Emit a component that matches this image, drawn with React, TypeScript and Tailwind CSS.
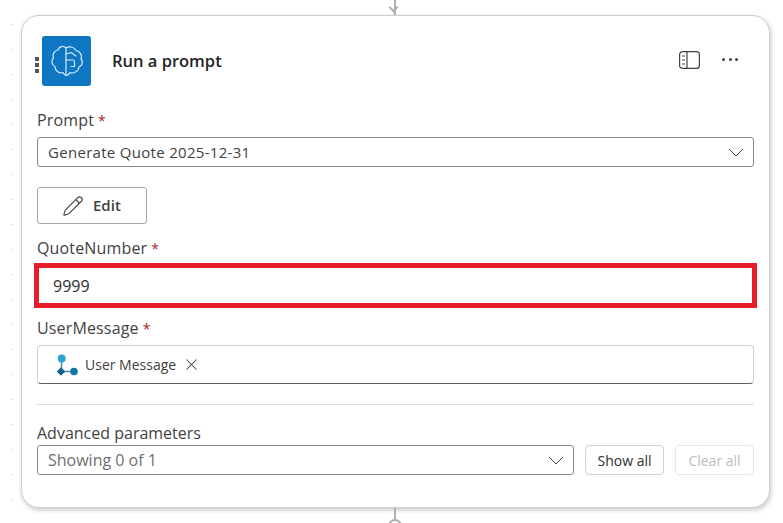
import { Pencil, X } from 'lucide-react';

function Chevron() {
    return (
        <svg width="16" height="9" viewBox="0 0 16 9" fill="none" className="text-[#424242]">
            <path d="M1 1 L8 8 L15 1" stroke="currentColor" strokeWidth="1" />
        </svg>
    );
}

function BrainIcon() {
    return (
        <svg width="32" height="32" viewBox="0 0 32 32" fill="none" stroke="#d6eafa" strokeWidth="1.2" strokeLinejoin="round" strokeLinecap="round">
            <path d="M15 3 C12.5 0.5 8 1 7 5 C3.5 5.5 1 9.5 2.5 13 C0 15.5 0.5 20 4 21.5 C4 26 8.5 29 12 27.5 C13 29.5 14 30.5 15 30.5 Z" />
            <path d="M15 3 C18 1 23 1.5 25 5.5 C29 6 31.5 10.5 30 14 C32.5 17 31 21 28 22 C27.5 26.5 22 29 19 27.5 C18 29.5 16.5 30.5 15 30.5" />
            <path d="M15 9 L20 7.5 L25 11 M15 15 L22 15 C23 15 23.5 16 23.5 17 L23.5 21.5 L20 21.5" />
        </svg>
    );
}

function Label({ text }: { text: string }) {
    return (
        <div className="text-[16px] leading-[22px] tracking-[0.15px] text-[#424242]">
            {text}
            <span className="ml-[4px] text-[14px] text-[#a4262c]">*</span>
        </div>
    );
}

export default function App() {
    return (
        <div className="relative h-[523px] w-[783px] overflow-hidden bg-white bg-[radial-gradient(circle,#bdbdbd_0.6px,transparent_1px)] bg-[size:25px_25px] bg-[position:0px_-13px] pl-[21px] pt-[15px] font-['Open_Sans',sans-serif]">
            {/* Connectors above and below the card */}
            <div className="absolute left-[394px] top-0 h-[15px] w-[2px] bg-[#b0b0b0]" />
            <div className="absolute left-[390px] top-[4px] h-[7px] w-[7px] -rotate-45 border-b-2 border-l-2 border-[#b0b0b0] ml-[-0.5px]" />
            <div className="absolute left-[394px] top-[508px] h-[13px] w-[2px] bg-[#b0b0b0]" />
            <div className="absolute left-[388px] top-[519px] h-[14px] w-[14px] rounded-full border-2 border-[#b0b0b0] bg-white" />

            <div className="h-[493px] w-[749px] rounded-[18px] border border-[#cfcfcf] bg-white px-[15px] shadow-[1px_2px_5px_rgba(0,0,0,0.22)]">
                {/* Header */}
                <div className="relative mt-[20px] flex h-[50px] items-center">
                    <div className="absolute left-[-2px] top-[21px] flex flex-col gap-[2px]">
                        <span className="h-[4px] w-[4px] bg-[#555555]" />
                        <span className="h-[4px] w-[4px] bg-[#555555]" />
                        <span className="h-[4px] w-[4px] bg-[#555555]" />
                    </div>
                    <div className="ml-[5px] flex h-[50px] w-[49px] items-center justify-center rounded-[3px] bg-[#0f76c4]">
                        <BrainIcon />
                    </div>
                    <div className="ml-[21px] flex-1 text-[16.5px] font-semibold text-[#242424]">Run a prompt</div>
                    <svg width="21" height="18" viewBox="0 0 21 18" fill="none" stroke="#424242" strokeWidth="1.2" className="mr-[22px] mt-[-3px]">
                        <rect x="0.6" y="0.6" width="19.8" height="16.8" rx="3" />
                        <path d="M8 0.6 V17.4 M3 5 H6 M3 9 H6 M3 13 H6" />
                    </svg>
                    <div className="mr-[16px] mt-[-4px] flex gap-[3.5px]">
                        <span className="h-[3px] w-[3px] rounded-full bg-[#424242]" />
                        <span className="h-[3px] w-[3px] rounded-full bg-[#424242]" />
                        <span className="h-[3px] w-[3px] rounded-full bg-[#424242]" />
                    </div>
                </div>

                {/* Prompt */}
                <div className="mt-[23px]"><Label text="Prompt" /></div>
                <div className="mt-[5px] flex h-[30px] items-center justify-between rounded-[3px] border border-[#8a8a8a] pl-[10px] pr-[9px] text-[15px] tracking-[0.3px] text-[#424242]">
                    <span>Generate Quote 2025-12-31</span>
                    <Chevron />
                </div>
                <button className="mt-[20px] flex h-[37px] w-[110px] items-center gap-[9px] rounded-[3px] border border-[#a6a6a6] bg-white pl-[24px] text-[15px] font-semibold text-[#424242]">
                    <Pencil size={22} strokeWidth={1.2} />
                    <span>Edit</span>
                </button>

                {/* QuoteNumber, with the red highlight around the field */}
                <div className="mt-[13px]"><Label text="QuoteNumber" /></div>
                <div className="-mx-[3px] mt-[3px] flex h-[45px] items-center border-[5px] border-[#e81c2b] pl-[14px] text-[16px] text-[#303030]">
                    9999
                </div>

                {/* UserMessage */}
                <div className="mt-[9px]"><Label text="UserMessage" /></div>
                <div className="mt-[5px] flex h-[39px] items-center rounded-[4px] border border-[#d1d1d1] border-b-[#616161] pl-[17px] text-[14px] text-[#424242]">
                    <svg width="23" height="22" viewBox="0 0 23 22" fill="none" className="mr-[7px]">
                        <path d="M6.5 5 V17.5 H19" stroke="#4a8fa8" strokeWidth="1.5" />
                        <circle cx="6.7" cy="4.5" r="4" fill="#2aa5cf" />
                        <rect x="3" y="14.5" width="6" height="6" transform="rotate(45 6 17.5)" fill="#11628f" />
                        <circle cx="19" cy="17.5" r="3.8" fill="#1173a8" />
                    </svg>
                    <span>User Message</span>
                    <X size={19} strokeWidth={1.3} className="ml-[6px]" />
                </div>

                <div className="mt-[20px] h-px bg-[#e0e0e0]" />

                {/* Advanced parameters */}
                <div className="mt-[17px] text-[16px] leading-[22px] text-[#424242]">Advanced parameters</div>
                <div className="mt-[1px] flex h-[30px] gap-[11px]">
                    <div className="flex flex-1 items-center justify-between rounded-[3px] border border-[#8a8a8a] pl-[10px] pr-[9px] text-[16px] text-[#707070]">
                        <span>Showing 0 of 1</span>
                        <Chevron />
                    </div>
                    <button className="w-[79px] rounded-[4px] border border-[#d1d1d1] bg-white text-[14px] text-[#303030]">Show all</button>
                    <button className="w-[79px] rounded-[4px] border border-[#e6e6e6] bg-white text-[14px] text-[#bdbdbd]">Clear all</button>
                </div>
            </div>
        </div>
    );
}
